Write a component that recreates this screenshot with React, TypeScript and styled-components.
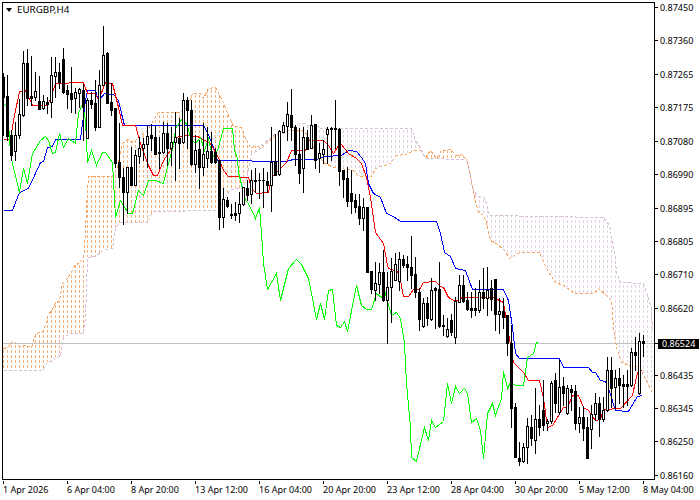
import styled, { createGlobalStyle } from 'styled-components';

type Point = [number, number];
// high, low, body top, body bottom, 1 = white body (page pixels)
type Bar = [number, number, number, number, number];

const BARS: Bar[] = [
  [73, 135, 77, 97, 0], [75, 140, 96, 136, 0], [130, 160, 135, 155, 0], [122, 160, 135, 151, 1],
  [99, 138, 114, 135, 1], [51, 116, 63, 115, 1], [49, 105, 63, 98, 0], [56, 105, 96, 98, 0],
  [72, 100, 91, 97, 1], [76, 109, 101, 109, 0], [95, 109, 101, 108, 1], [97, 113, 102, 104, 0],
  [57, 117, 75, 102, 1], [57, 97, 72, 76, 1], [63, 88, 72, 82, 0], [48, 93, 59, 92, 0],
  [85, 108, 90, 94, 0], [67, 112, 93, 99, 0], [88, 113, 92, 98, 1], [88, 107, 89, 93, 1],
  [84, 140, 90, 107, 0], [98, 138, 100, 138, 1], [92, 108, 100, 104, 0], [80, 130, 103, 127, 0],
  [70, 127, 85, 127, 1], [26, 83, 55, 85, 1], [52, 103, 53, 103, 0], [83, 115, 102, 110, 0],
  [108, 167, 108, 163, 0], [123, 187, 162, 177, 0], [168, 224, 177, 192, 0], [167, 213, 167, 192, 1],
  [147, 185, 167, 185, 0], [150, 185, 155, 185, 1], [137, 163, 148, 156, 1], [138, 160, 144, 148, 1],
  [125, 167, 136, 144, 1], [124, 150, 135, 138, 0], [126, 154, 137, 154, 0], [137, 168, 152, 153, 0],
  [122, 153, 133, 152, 1], [123, 165, 133, 148, 0], [127, 165, 142, 148, 1], [112, 180, 137, 142, 1],
  [118, 168, 138, 143, 0], [93, 143, 100, 142, 1], [97, 148, 100, 110, 0], [100, 165, 110, 164, 0],
  [135, 172, 150, 164, 1], [140, 188, 149, 167, 0], [123, 175, 154, 167, 1], [127, 167, 151, 158, 1],
  [132, 163, 151, 162, 0], [148, 163, 152, 162, 0], [160, 229, 160, 217, 0], [188, 227, 199, 217, 1],
  [197, 207, 200, 206, 0], [204, 218, 214, 215, 0], [202, 220, 213, 215, 0], [192, 222, 204, 213, 1],
  [187, 205, 187, 204, 1], [180, 200, 188, 195, 0], [170, 203, 180, 194, 1], [168, 192, 180, 181, 0],
  [173, 198, 180, 180, 0], [168, 207, 180, 180, 0], [172, 192, 181, 185, 0], [127, 211, 162, 185, 1],
  [134, 175, 161, 175, 0], [130, 175, 131, 174, 1], [122, 132, 125, 132, 1], [102, 140, 114, 126, 1],
  [89, 140, 115, 127, 0], [125, 165, 127, 154, 0], [128, 183, 154, 173, 0], [127, 192, 137, 168, 1],
  [130, 149, 137, 149, 0], [115, 148, 125, 148, 1], [124, 168, 124, 160, 0], [143, 172, 153, 158, 1],
  [140, 163, 149, 154, 1], [127, 163, 129, 134, 1], [127, 160, 128, 129, 0], [100, 148, 128, 129, 0],
  [128, 185, 129, 171, 0], [170, 197, 170, 179, 0], [167, 206, 178, 201, 0], [170, 213, 193, 201, 0],
  [194, 212, 200, 207, 0], [194, 224, 206, 218, 0], [198, 230, 207, 218, 1], [207, 272, 207, 272, 0],
  [271, 293, 271, 289, 0], [262, 300, 283, 290, 1], [263, 293, 272, 284, 1], [250, 301, 272, 300, 0],
  [272, 343, 287, 300, 1], [258, 322, 271, 287, 1], [253, 272, 264, 280, 1], [252, 290, 259, 281, 1],
  [255, 267, 259, 265, 0], [256, 280, 264, 267, 0], [236, 288, 267, 275, 0], [257, 297, 274, 292, 0],
  [288, 330, 292, 319, 0], [298, 327, 303, 326, 1], [297, 325, 303, 318, 0], [278, 320, 290, 319, 1],
  [287, 328, 288, 290, 0], [262, 327, 289, 326, 0], [315, 335, 325, 326, 0], [318, 337, 329, 336, 1],
  [314, 335, 320, 332, 0], [297, 343, 301, 337, 1], [275, 302, 285, 302, 1], [275, 302, 285, 301, 0],
  [292, 310, 300, 309, 0], [292, 317, 308, 310, 0], [288, 315, 308, 310, 0], [280, 312, 292, 310, 1],
  [268, 308, 292, 298, 0], [267, 315, 290, 298, 1], [280, 310, 288, 299, 0], [279, 330, 279, 314, 0],
  [298, 333, 311, 314, 1], [298, 328, 311, 317, 0], [315, 355, 315, 343, 0], [325, 427, 343, 408, 0],
  [403, 457, 407, 457, 0], [442, 465, 458, 461, 0], [443, 462, 447, 461, 1], [418, 463, 426, 447, 1],
  [415, 445, 427, 438, 0], [388, 453, 419, 440, 1], [405, 435, 419, 427, 0], [380, 430, 410, 425, 0],
  [419, 430, 421, 423, 1], [381, 423, 383, 421, 1], [373, 412, 380, 403, 0], [360, 414, 387, 412, 1],
  [377, 405, 386, 393, 0], [385, 414, 388, 413, 1], [385, 410, 389, 392, 0], [385, 429, 391, 423, 0],
  [407, 432, 417, 423, 1], [406, 440, 417, 428, 0], [417, 458, 427, 458, 0], [405, 448, 414, 429, 1],
  [393, 420, 403, 414, 1], [397, 436, 403, 419, 0], [397, 421, 410, 419, 1], [357, 411, 370, 410, 1],
  [357, 407, 370, 388, 0], [370, 408, 378, 387, 1], [368, 403, 378, 385, 0], [375, 407, 384, 386, 0],
  [370, 405, 384, 386, 0], [348, 386, 352, 385, 1], [337, 370, 352, 355, 0], [333, 394, 341, 393, 1],
  [335, 356, 341, 343, 0],
];

const SENKOU_A: Point[] = [
  [3, 348], [7, 347], [13, 340], [19, 346], [24, 345], [31, 347], [35, 334], [40, 331], [43, 331], [48, 314],
  [52, 309], [55, 302], [59, 301], [62, 283], [67, 278], [70, 273], [75, 264], [79, 263], [83, 257], [84, 248],
  [87, 190], [88, 176], [112, 176], [117, 167], [122, 143], [127, 139], [133, 142], [140, 135], [147, 130], [153, 120],
  [158, 112], [180, 112], [187, 106], [192, 93], [200, 93], [203, 98], [208, 88], [215, 87], [222, 100], [227, 113],
  [233, 126], [241, 127], [246, 140], [250, 147], [255, 146], [262, 147], [267, 142], [275, 135], [283, 131], [290, 130],
  [301, 130], [305, 132], [313, 147], [323, 162], [333, 167], [353, 170], [358, 176], [371, 176], [375, 168], [390, 163],
  [396, 155], [406, 154], [413, 150], [420, 150], [425, 157], [430, 150], [436, 158], [441, 150], [450, 149], [456, 155],
  [461, 154], [466, 159], [469, 170], [471, 183], [474, 197], [478, 212], [483, 215], [486, 222], [490, 240], [496, 243],
  [504, 250], [509, 258], [519, 252], [539, 252], [548, 272], [556, 283], [562, 284], [574, 293], [594, 293], [598, 288],
  [606, 295], [611, 300], [613, 327], [616, 347], [621, 362], [629, 365], [639, 367], [646, 380], [652, 393],
];

const SENKOU_B: Point[] = [
  [3, 370], [42, 370], [47, 362], [53, 360], [55, 357], [60, 356], [63, 337], [70, 333], [83, 333], [85, 317],
  [87, 257], [95, 256], [102, 250], [112, 248], [115, 227], [120, 222], [147, 222], [152, 211], [217, 210], [230, 189],
  [241, 188], [245, 182], [248, 170], [251, 153], [258, 150], [263, 143], [268, 139], [276, 133], [288, 133], [291, 128],
  [298, 123], [305, 123], [308, 126], [318, 126], [320, 128], [411, 128], [415, 140], [418, 144], [425, 158], [463, 159],
  [466, 159], [469, 170], [472, 187], [476, 195], [483, 197], [486, 202], [489, 215], [603, 217], [609, 225], [613, 248],
  [614, 250], [616, 272], [620, 282], [643, 283], [646, 292], [651, 308], [652, 330],
];

const KIJUN: Point[] = [
  [3, 210], [12, 210], [15, 202], [19, 192], [28, 188], [35, 173], [40, 162], [43, 161], [47, 147], [52, 146],
  [55, 139], [80, 139], [82, 123], [85, 100], [87, 90], [95, 90], [97, 97], [100, 98], [104, 93], [113, 94],
  [118, 100], [122, 117], [124, 125], [203, 125], [207, 132], [213, 147], [217, 160], [285, 161], [293, 159], [316, 159],
  [325, 156], [341, 155], [348, 150], [356, 151], [361, 157], [365, 163], [368, 183], [373, 193], [380, 197], [386, 213],
  [393, 216], [400, 221], [436, 221], [440, 233], [444, 252], [450, 256], [455, 268], [465, 270], [472, 289], [503, 289],
  [508, 300], [512, 327], [515, 353], [519, 358], [559, 358], [563, 367], [588, 367], [592, 372], [595, 372], [600, 380],
  [605, 381], [608, 388], [615, 410], [628, 411], [637, 396], [642, 395],
];

const TENKAN: Point[] = [
  [3, 139], [10, 139], [13, 120], [19, 91], [25, 90], [32, 105], [47, 105], [50, 98], [55, 83], [83, 82],
  [87, 93], [95, 93], [98, 100], [105, 82], [112, 83], [115, 95], [118, 107], [122, 125], [135, 125], [140, 143],
  [147, 163], [153, 175], [157, 175], [163, 160], [170, 150], [175, 137], [185, 135], [197, 136], [210, 143], [218, 157],
  [223, 170], [228, 176], [248, 177], [251, 188], [256, 193], [268, 192], [271, 177], [275, 173], [286, 162], [291, 150],
  [305, 150], [308, 140], [323, 140], [328, 145], [333, 153], [338, 145], [341, 144], [348, 153], [356, 158], [361, 163],
  [366, 177], [370, 197], [375, 232], [383, 243], [387, 265], [388, 268], [397, 271], [400, 280], [403, 296], [408, 296],
  [413, 289], [419, 289], [423, 282], [435, 281], [440, 286], [443, 287], [448, 297], [455, 301], [462, 297], [492, 297],
  [497, 299], [503, 302], [508, 333], [513, 362], [523, 372], [528, 380], [539, 380], [543, 398], [547, 427], [552, 425],
  [563, 407], [567, 407], [572, 395], [578, 395], [583, 407], [588, 410], [595, 420], [600, 419], [603, 409], [620, 408],
  [632, 395], [637, 372], [642, 369],
];

const CHIKOU: Point[] = [
  [3, 103], [7, 107], [10, 153], [12, 163], [19, 192], [23, 168], [27, 183], [32, 153], [40, 140], [45, 136],
  [48, 140], [52, 153], [55, 152], [59, 133], [63, 147], [68, 138], [75, 143], [78, 113], [82, 103], [85, 120],
  [87, 162], [91, 150], [96, 165], [102, 152], [105, 152], [112, 162], [115, 217], [120, 200], [128, 213], [132, 213],
  [138, 190], [143, 195], [148, 180], [155, 180], [163, 183], [168, 163], [173, 145], [175, 128], [182, 118], [187, 125],
  [190, 138], [195, 143], [200, 137], [204, 150], [208, 138], [212, 157], [217, 150], [223, 128], [232, 128], [234, 150],
  [237, 158], [238, 172], [245, 200], [248, 203], [255, 218], [259, 207], [261, 233], [263, 263], [267, 289], [276, 273],
  [280, 300], [288, 268], [296, 259], [301, 264], [308, 278], [311, 293], [316, 319], [320, 303], [324, 319], [328, 290],
  [332, 289], [336, 325], [340, 327], [344, 321], [347, 331], [356, 285], [361, 305], [366, 309], [371, 309], [376, 293],
  [381, 297], [384, 290], [391, 315], [396, 312], [400, 318], [404, 343], [406, 383], [410, 427], [411, 457], [416, 461],
  [424, 427], [428, 440], [431, 420], [435, 427], [443, 421], [447, 383], [451, 403], [455, 386], [459, 393], [464, 388],
  [467, 393], [471, 422], [476, 418], [480, 430], [483, 458], [487, 413], [492, 403], [495, 415], [501, 398], [503, 371],
  [507, 388], [510, 382], [515, 385], [523, 385], [527, 357], [533, 353], [536, 342], [538, 343],
];

const PRICES = [
  '0.87450', '0.87360', '0.87265', '0.87175', '0.87080', '0.86990', '0.86895', '0.86805',
  '0.86710', '0.86620', '0.86524', '0.86435', '0.86345', '0.86250', '0.86160',
];
const CURRENT_PRICE = '0.86524';

const TIMES = [
  '1 Apr 2026', '6 Apr 04:00', '8 Apr 20:00', '13 Apr 12:00', '16 Apr 04:00', '20 Apr 20:00',
  '23 Apr 12:00', '28 Apr 04:00', '30 Apr 20:00', '5 May 12:00', '8 May 04:00',
];

const toPoints = (line: Point[]) => line.map(([x, y]) => `${x + 0.5},${y + 0.5}`).join(' ');

const sample = (line: Point[], x: number) => {
  for (let i = 1; i < line.length; i++) {
    const [x0, y0] = line[i - 1];
    const [x1, y1] = line[i];
    if (x <= x1) return Math.round(y0 + ((y1 - y0) * (x - x0)) / (x1 - x0 || 1));
  }
  return line[line.length - 1][1];
};

const hatchColumns = Array.from({ length: 163 }, (_, i) => {
  const x = 3 + i * 4;
  const a = sample(SENKOU_A, x);
  const b = sample(SENKOU_B, x);
  return { x, top: Math.min(a, b), bottom: Math.max(a, b), rising: a <= b };
});

const Cloud = () => (
  <g>
    {hatchColumns.map(({ x, top, bottom, rising }) => (
      <HatchLine
        key={x}
        $rising={rising}
        x1={x + 0.5}
        x2={x + 0.5}
        y1={top}
        y2={bottom}
        strokeDashoffset={top % 5}
      />
    ))}
    <SenkouLine $color="#f4a460" points={toPoints(SENKOU_A)} />
    <SenkouLine $color="#d8bfd8" points={toPoints(SENKOU_B)} />
  </g>
);

const Candles = () => (
  <g>
    {BARS.map(([high, low, top, bottom, white], i) => {
      const x = 3 + i * 4;
      return (
        <g key={x}>
          <Wick x={x} y={high} width={1} height={low - high + 1} />
          {white ? (
            <WhiteBody x={x - 0.5} y={top + 0.5} width={2} height={Math.max(bottom - top, 1)} />
          ) : (
            <BlackBody x={x - 1} y={top} width={3} height={bottom - top + 1} />
          )}
        </g>
      );
    })}
  </g>
);

const App = () => (
  <>
    <GlobalStyle />
    <Terminal>
      <ChartPanel>
        <Symbol>
          <SymbolArrow />
          EURGBP,H4
        </Symbol>
        <ChartSvg viewBox="3 3 651 476" width={651} height={476}>
          <Cloud />
          <PriceLine x1={3} x2={654} y1={343.5} y2={343.5} />
          <IndicatorLine $color="#0000ff" points={toPoints(KIJUN)} />
          <IndicatorLine $color="#ff0000" points={toPoints(TENKAN)} />
          <IndicatorLine $color="#00ff00" points={toPoints(CHIKOU)} />
          <Candles />
        </ChartSvg>
      </ChartPanel>
      <PriceAxis>
        {PRICES.map((price) => (
          <PriceRow key={price} $current={price === CURRENT_PRICE}>
            <PriceLabel $current={price === CURRENT_PRICE}>{price}</PriceLabel>
          </PriceRow>
        ))}
      </PriceAxis>
      <TimeAxis>
        {TIMES.map((time) => (
          <TimeCell key={time}>{time}</TimeCell>
        ))}
      </TimeAxis>
    </Terminal>
  </>
);

const GlobalStyle = createGlobalStyle`
  html, body {
    margin: 0;
    background: #ffffff;
  }
`;

const Terminal = styled.div`
  display: grid;
  grid-template-columns: 653px 45px;
  grid-template-rows: 478px 20px;
  width: 700px;
  height: 500px;
  padding: 2px 0 0 2px;
  box-sizing: border-box;
  overflow: hidden;
  background: #ffffff;
  color: #000000;
  font-family: 'Noto Sans', 'Liberation Sans', sans-serif;
  font-size: 9px;
`;

const ChartPanel = styled.div`
  position: relative;
  border: 1px solid #000000;
  line-height: 0;
`;

const ChartSvg = styled.svg`
  display: block;
  shape-rendering: crispEdges;
`;

const Symbol = styled.div`
  position: absolute;
  top: 1px;
  left: 3px;
  display: flex;
  align-items: center;
  gap: 5px;
  height: 12px;
  line-height: 12px;
  font-size: 9.8px;
`;

const SymbolArrow = styled.span`
  width: 0;
  height: 0;
  border-left: 3.5px solid transparent;
  border-right: 3.5px solid transparent;
  border-top: 4px solid #000000;
`;

const HatchLine = styled.line<{ $rising: boolean }>`
  stroke: ${({ $rising }) => ($rising ? '#f6b27a' : '#e4d3e4')};
  stroke-width: 1;
  stroke-dasharray: 3 2;
`;

const SenkouLine = styled.polyline<{ $color: string }>`
  fill: none;
  stroke: ${({ $color }) => $color};
  stroke-width: 1;
  stroke-dasharray: 3 2;
`;

const IndicatorLine = styled.polyline<{ $color: string }>`
  fill: none;
  stroke: ${({ $color }) => $color};
  stroke-width: 1;
`;

const PriceLine = styled.line`
  stroke: #c0c0c0;
  stroke-width: 1;
`;

const Wick = styled.rect`
  fill: #000000;
`;

const BlackBody = styled.rect`
  fill: #000000;
`;

const WhiteBody = styled.rect`
  fill: #ffffff;
  stroke: #000000;
  stroke-width: 1;
`;

const PriceAxis = styled.div`
  display: flex;
  flex-direction: column;
  gap: 18.43px;
  margin-top: -2px;
`;

const PriceRow = styled.div<{ $current: boolean }>`
  display: flex;
  align-items: center;
  flex: 0 0 15px;
  height: 15px;
  line-height: 15px;
  margin: ${({ $current }) => ($current ? '2px 0 -2px' : '0')};

  &::before {
    content: '';
    flex: none;
    width: 3px;
    height: 1px;
    margin-right: ${({ $current }) => ($current ? '0' : '2px')};
    background: #000000;
  }
`;

const PriceLabel = styled.span<{ $current: boolean }>`
  ${({ $current }) =>
    $current &&
    `
    flex: none;
    width: 41px;
    height: 10px;
    line-height: 10px;
    padding-left: 4px;
    box-sizing: border-box;
    background: #000000;
    color: #ffffff;
  `}
`;

const TimeAxis = styled.div`
  grid-column: 1 / -1;
  display: flex;
  padding-left: 1px;
`;

const TimeCell = styled.div`
  flex: 0 0 64px;
  padding-top: 1px;
  line-height: 17px;
  white-space: nowrap;

  &::before {
    content: '';
    display: block;
    width: 1px;
    height: 3px;
    margin-bottom: -3px;
    background: #000000;
  }
`;

export default App;
